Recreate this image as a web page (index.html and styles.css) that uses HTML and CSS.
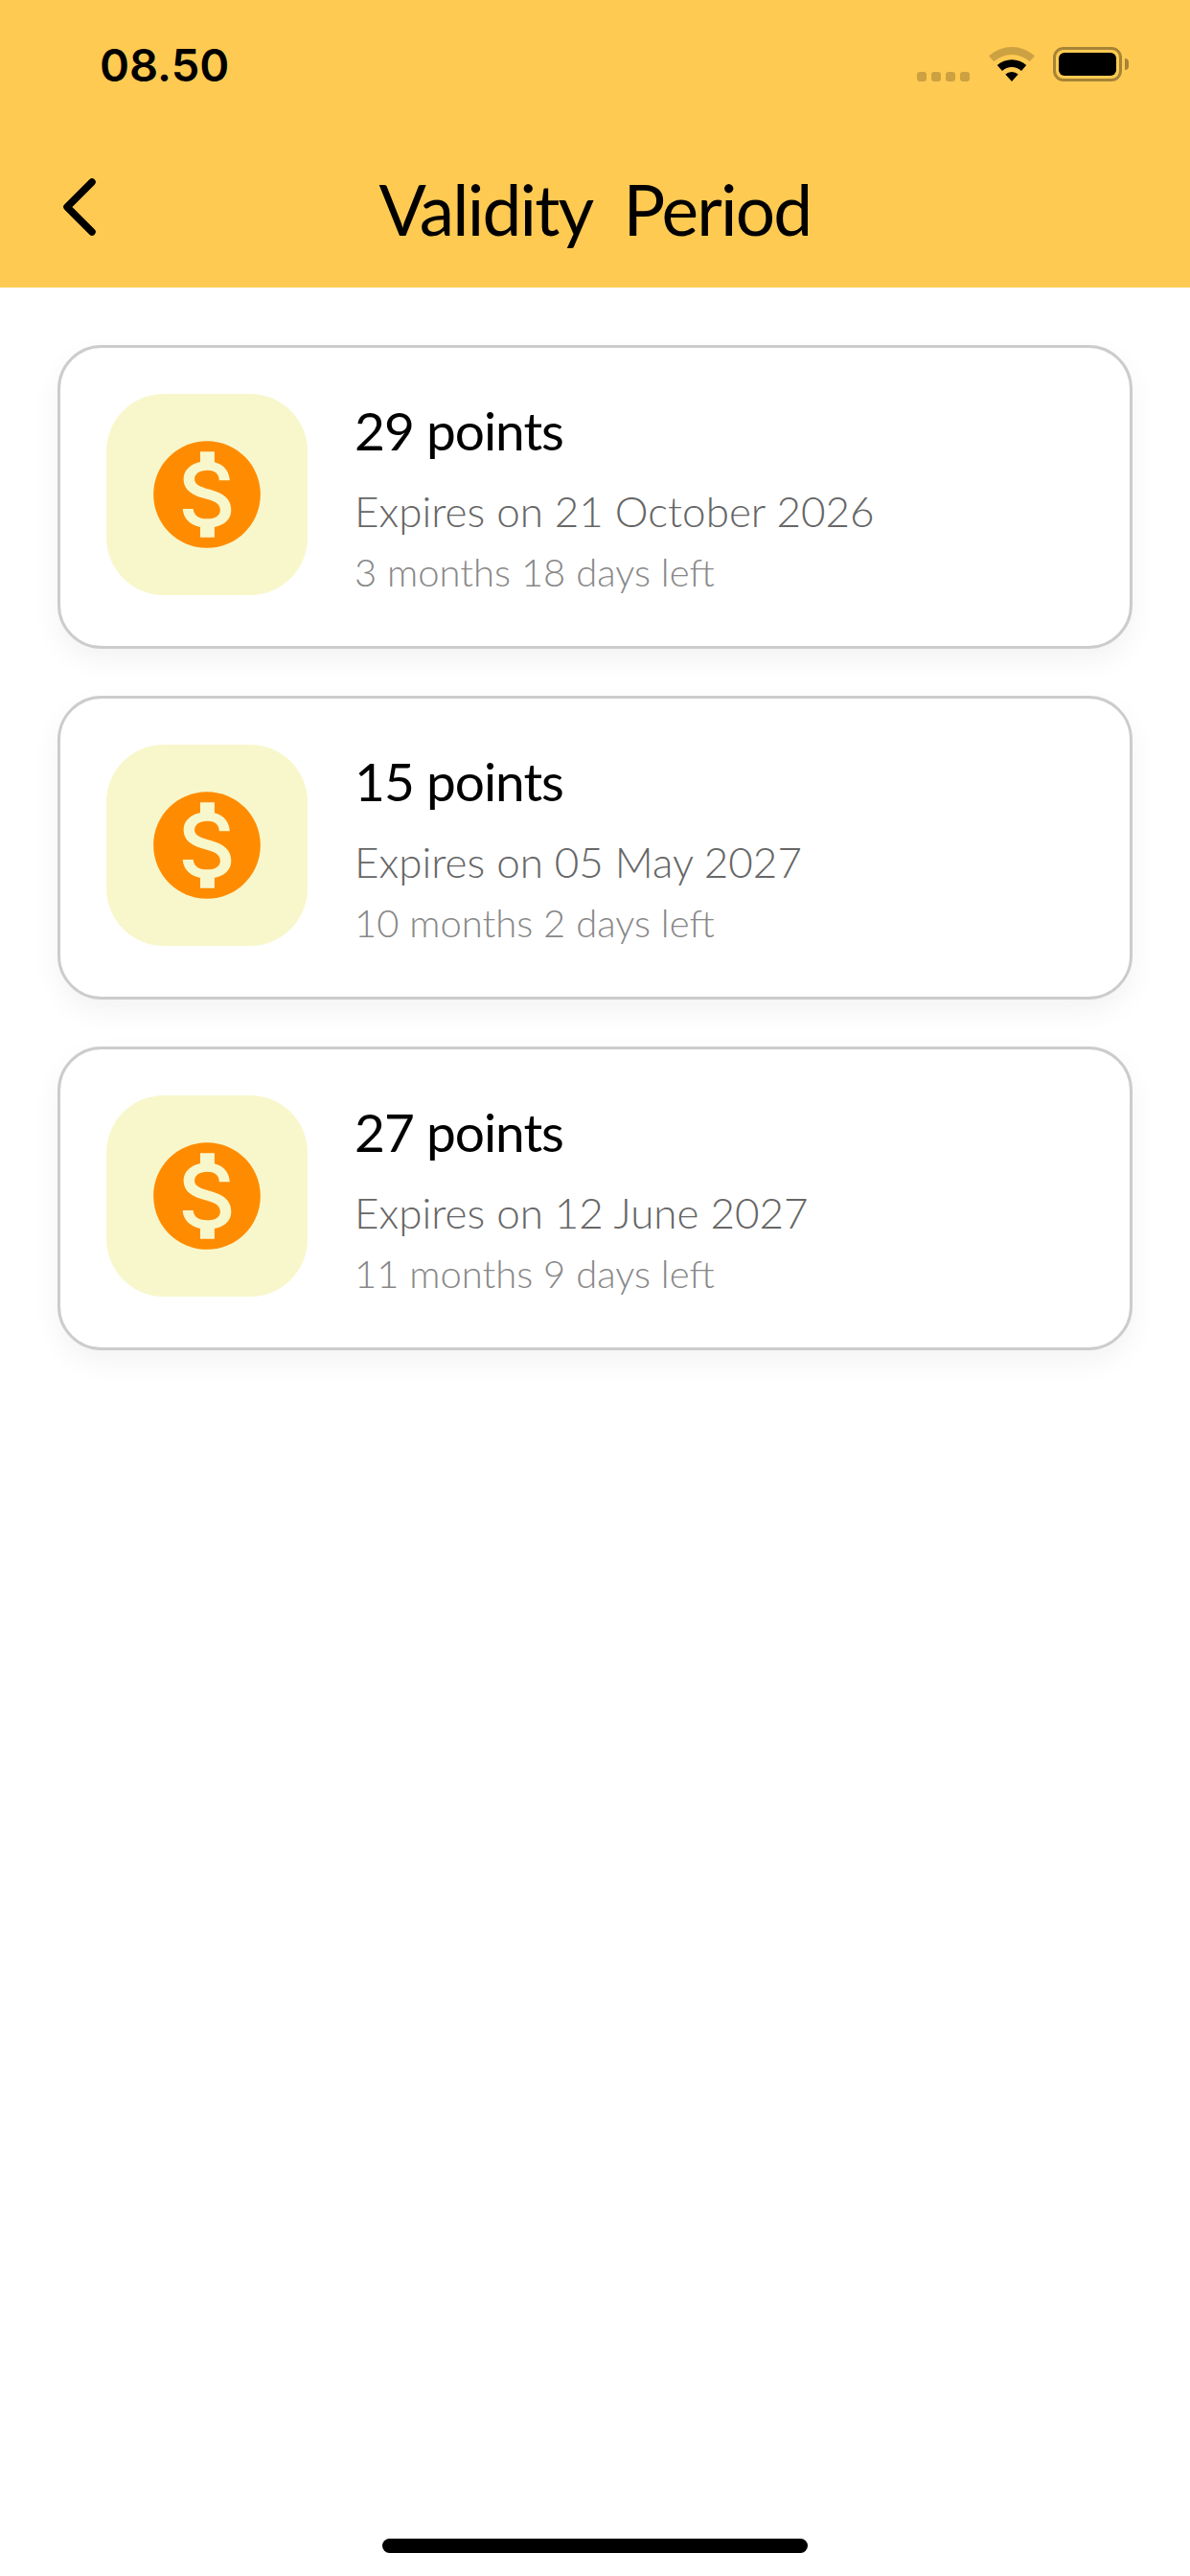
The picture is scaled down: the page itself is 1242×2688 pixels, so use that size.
FILE: index.html
```html
<!DOCTYPE html>
<html lang="en">
<head>
<meta charset="utf-8">
<title>Validity Period</title>
<link rel="stylesheet" href="styles.css">
</head>
<body>
<div class="screen">
  <header class="header">
    <div class="status">
      <span class="time">08.50</span>
      <div class="status-icons">
        <div class="signal"><i></i><i></i><i></i><i></i></div>
        <svg class="wifi" viewBox="0 0 48 36"><path class="dim" d="M0 9.2A36 36 0 0 1 48 9.2L42.7 15.2A28 28 0 0 0 5.3 15.2Z"/><path d="M8.8 19.1A22.7 22.7 0 0 1 39.2 19.1L34 24.9A15 15 0 0 0 14 24.9Z"/><path d="M17.3 28.6A10 10 0 0 1 30.7 28.6L24 36Z"/></svg>
        <div class="battery"><div class="battery-body"><div class="battery-fill"></div></div><div class="battery-nub"></div></div>
      </div>
    </div>
    <div class="nav">
      <svg class="back" viewBox="0 0 36 60"><path d="M31 4 5 30 31 56"/></svg>
      <h1 class="title">Validity&nbsp; Period</h1>
    </div>
  </header>
  <main class="list">
    <article class="card">
      <div class="tile"><svg class="coin" viewBox="0 0 24 24"><path d="M12 2C6.48 2 2 6.48 2 12s4.48 10 10 10 10-4.48 10-10S17.52 2 12 2zm1.41 16.09V20h-2.67v-1.93c-1.71-.36-3.16-1.46-3.27-3.4h1.96c.1 1.05.82 1.87 2.65 1.87 1.96 0 2.4-.98 2.4-1.59 0-.83-.44-1.61-2.67-2.14-2.48-.6-4.18-1.62-4.18-3.67 0-1.72 1.39-2.84 3.11-3.21V4h2.67v1.95c1.86.45 2.79 1.86 2.85 3.39H14.3c-.05-1.11-.64-1.87-2.22-1.87-1.5 0-2.4.68-2.4 1.64 0 .84.65 1.39 2.67 1.91s4.18 1.39 4.18 3.91c-.01 1.83-1.38 2.83-3.12 3.16z"/></svg></div>
      <div class="info"><div class="points">29 points</div><div class="expires">Expires on 21 October 2026</div><div class="left">3 months 18 days left</div></div>
    </article>
    <article class="card">
      <div class="tile"><svg class="coin" viewBox="0 0 24 24"><path d="M12 2C6.48 2 2 6.48 2 12s4.48 10 10 10 10-4.48 10-10S17.52 2 12 2zm1.41 16.09V20h-2.67v-1.93c-1.71-.36-3.16-1.46-3.27-3.4h1.96c.1 1.05.82 1.87 2.65 1.87 1.96 0 2.4-.98 2.4-1.59 0-.83-.44-1.61-2.67-2.14-2.48-.6-4.18-1.62-4.18-3.67 0-1.72 1.39-2.84 3.11-3.21V4h2.67v1.95c1.86.45 2.79 1.86 2.85 3.39H14.3c-.05-1.11-.64-1.87-2.22-1.87-1.5 0-2.4.68-2.4 1.64 0 .84.65 1.39 2.67 1.91s4.18 1.39 4.18 3.91c-.01 1.83-1.38 2.83-3.12 3.16z"/></svg></div>
      <div class="info"><div class="points">15 points</div><div class="expires">Expires on 05 May 2027</div><div class="left">10 months 2 days left</div></div>
    </article>
    <article class="card">
      <div class="tile"><svg class="coin" viewBox="0 0 24 24"><path d="M12 2C6.48 2 2 6.48 2 12s4.48 10 10 10 10-4.48 10-10S17.52 2 12 2zm1.41 16.09V20h-2.67v-1.93c-1.71-.36-3.16-1.46-3.27-3.4h1.96c.1 1.05.82 1.87 2.65 1.87 1.96 0 2.4-.98 2.4-1.59 0-.83-.44-1.61-2.67-2.14-2.48-.6-4.18-1.62-4.18-3.67 0-1.72 1.39-2.84 3.11-3.21V4h2.67v1.95c1.86.45 2.79 1.86 2.85 3.39H14.3c-.05-1.11-.64-1.87-2.22-1.87-1.5 0-2.4.68-2.4 1.64 0 .84.65 1.39 2.67 1.91s4.18 1.39 4.18 3.91c-.01 1.83-1.38 2.83-3.12 3.16z"/></svg></div>
      <div class="info"><div class="points">27 points</div><div class="expires">Expires on 12 June 2027</div><div class="left">11 months 9 days left</div></div>
    </article>
  </main>
  <div class="home-area"><div class="home-bar"></div></div>
</div>
</body>
</html>
```
FILE: styles.css
```css
* { box-sizing: border-box; }
html, body { margin: 0; padding: 0; background: #fff; }
.screen { width: 1242px; height: 2688px; display: flex; flex-direction: column; font-family: Lato, "Noto Sans", sans-serif; color: #000; overflow: hidden; }
.header { height: 300px; flex: none; background: #ffca52; display: flex; flex-direction: column; }
.status { height: 134px; flex: none; display: flex; align-items: center; justify-content: space-between; padding: 0 64px 0 104px; }
.time { font-family: Inter, sans-serif; font-weight: 600; font-size: 47px; line-height: 1; }
.status-icons { display: flex; align-items: flex-end; height: 36px; }
.signal { display: flex; gap: 5px; margin-right: 20px; }
.signal i { display: block; width: 10px; height: 10px; border-radius: 3px; background: rgba(0,0,0,.2); }
.wifi { width: 48px; height: 36px; display: block; margin-right: 19px; }
.wifi path { fill: #000; }
.wifi path.dim { fill: rgba(0,0,0,.2); }
.battery { display: flex; align-items: center; }
.battery-body { width: 72px; height: 36px; border: 3px solid rgba(0,0,0,.35); border-radius: 11px; padding: 3px; }
.battery-fill { width: 100%; height: 100%; background: #000; border-radius: 6px; }
.battery-nub { width: 4px; height: 12px; margin-left: 3px; background: rgba(0,0,0,.35); border-radius: 0 6px 6px 0; }
.nav { flex: 1; position: relative; display: flex; justify-content: center; padding-top: 39px; }
.back { position: absolute; left: 65px; top: 52px; width: 36px; height: 60px; }
.back path { fill: none; stroke: #000; stroke-width: 7.5; stroke-linecap: round; stroke-linejoin: round; }
.title { margin: 0; font-weight: 400; font-size: 73px; line-height: 90px; letter-spacing: -1.8px; }
.list { display: flex; flex-direction: column; gap: 49px; padding: 60px 60px 0; flex: 1; }
.card { height: 317px; display: flex; gap: 49px; padding: 48px 48px 53px; background: #fff; border: 3px solid #ccc; border-radius: 46px; box-shadow: 0 12px 30px rgba(0,0,0,.05); }
.tile { width: 210px; height: 210px; flex: none; border-radius: 60px; background: #f8f7cc; display: flex; align-items: center; justify-content: center; }
.coin { width: 134px; height: 134px; display: block; }
.coin path { fill: #ff8c00; }
.info { display: flex; flex-direction: column; padding-top: 6px; }
.points { font-size: 55px; line-height: 64px; font-weight: 400; letter-spacing: -1px; }
.expires { font-size: 44px; line-height: 60px; margin-top: 22px; font-weight: 300; color: #666; }
.left { font-size: 40px; line-height: 50px; margin-top: 9px; font-weight: 300; color: #888; }
.home-area { flex: none; height: 39px; display: flex; justify-content: center; }
.home-bar { width: 444px; height: 15px; border-radius: 8px; background: #000; }
```
